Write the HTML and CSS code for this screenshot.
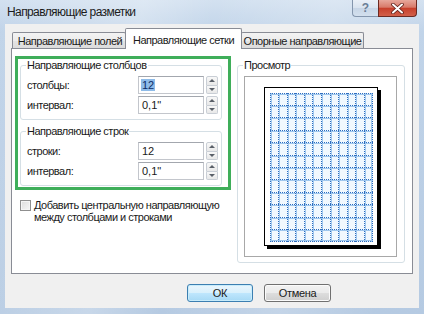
FILE: index.html
```html
<!DOCTYPE html>
<html lang="ru">
<head>
<meta charset="utf-8">
<title>Направляющие разметки</title>
<link rel="stylesheet" href="styles.css">
</head>
<body>
<div class="window">
  <div class="titlebar">
    <span class="title">Направляющие разметки</span>
    <div class="caption-btns">
      <div class="cap help">?</div>
      <div class="cap close">
        <svg width="13" height="11" viewBox="0 0 13 11"><path d="M2 1.5 L11 9.5 M11 1.5 L2 9.5" stroke="#5a1d16" stroke-width="3.6" stroke-linecap="round"/><path d="M2 1.5 L11 9.5 M11 1.5 L2 9.5" stroke="#fff" stroke-width="2" stroke-linecap="round"/></svg>
      </div>
    </div>
  </div>
  <div class="client">
    <div class="tabs">
      <div class="tab t1">Направляющие полей</div>
      <div class="tab active t2">Направляющие сетки</div>
      <div class="tab t3">Опорные направляющие</div>
    </div>
    <div class="panel">
      <div class="left">
        <div class="highlight">
          <fieldset class="group">
            <legend>Направляющие столбцов</legend>
            <div class="fields">
              <span class="label">столбцы:</span>
              <div class="spin-input"><div class="input"><span class="sel">12</span></div><div class="spinner"><span class="up"></span><span class="down"></span></div></div>
              <span class="label">интервал:</span>
              <div class="spin-input"><div class="input">0,1"</div><div class="spinner"><span class="up"></span><span class="down"></span></div></div>
            </div>
          </fieldset>
          <fieldset class="group g2">
            <legend>Направляющие строк</legend>
            <div class="fields">
              <span class="label">строки:</span>
              <div class="spin-input"><div class="input">12</div><div class="spinner"><span class="up"></span><span class="down"></span></div></div>
              <span class="label">интервал:</span>
              <div class="spin-input"><div class="input">0,1"</div><div class="spinner"><span class="up"></span><span class="down"></span></div></div>
            </div>
          </fieldset>
        </div>
        <label class="check"><span class="box"></span><span class="check-text">Добавить центральную направляющую<br>между столбцами и строками</span></label>
      </div>
      <fieldset class="group preview">
        <legend>Просмотр</legend>
        <div class="preview-box">
          <div class="page">
            <svg class="grid" width="103" height="149" viewBox="0 0 103 149">
              <rect x="0" y="0" width="103" height="149" fill="#f1f8fe"/>
              <path class="lt" d="M1.5 0V149M9.5 0V149M18.5 0V149M26.5 0V149M35.5 0V149M43.5 0V149M52.5 0V149M61.5 0V149M69.5 0V149M78.5 0V149M86.5 0V149M95.5 0V149M101.5 0V149M0 1.5H103M0 13.5H103M0 25.5H103M0 38.5H103M0 50.5H103M0 63.5H103M0 75.5H103M0 87.5H103M0 100.5H103M0 112.5H103M0 125.5H103M0 137.5H103M0 147.5H103"/>
              <path class="dk" d="M0.5 0V149M8.5 0V149M17.5 0V149M25.5 0V149M34.5 0V149M42.5 0V149M51.5 0V149M60.5 0V149M68.5 0V149M77.5 0V149M85.5 0V149M94.5 0V149M102.5 0V149M0 0.5H103M0 12.5H103M0 24.5H103M0 37.5H103M0 49.5H103M0 62.5H103M0 74.5H103M0 86.5H103M0 99.5H103M0 111.5H103M0 124.5H103M0 136.5H103M0 148.5H103"/>
            </svg>
          </div>
        </div>
      </fieldset>
    </div>
    <div class="actions">
      <button class="btn default">ОК</button>
      <button class="btn">Отмена</button>
    </div>
  </div>
</div>
</body>
</html>
```
FILE: styles.css
```css
html, body {
  margin: 0;
  padding: 0;
  background: #b9cde4;
}
.window {
  width: 424px;
  height: 314px;
  box-sizing: border-box;
  padding: 0 5px 6px 5px;
  display: flex;
  flex-direction: column;
  background:
    linear-gradient(100deg, rgba(255,255,255,0) 0%, rgba(255,255,255,0.25) 30%, rgba(255,255,255,0) 45%, rgba(255,255,255,0.2) 70%, rgba(255,255,255,0) 90%),
    linear-gradient(180deg, #d3e1f0 0%, #c1d4e9 10%, #b5cae2 100%);
  font-family: "Liberation Sans", Arial, sans-serif;
  font-size: 11px;
  letter-spacing: -0.5px;
  color: #1a1a1a;
}
.titlebar {
  height: 24px;
  flex: none;
  display: flex;
  align-items: flex-start;
}
.title {
  font-family: "Liberation Sans", Arial, sans-serif;
  font-size: 12px;
  letter-spacing: -0.6px;
  line-height: 25px;
  padding-left: 2px;
  color: #1b1b1b;
}
.caption-btns {
  margin-left: auto;
  margin-right: 2px;
  display: flex;
}
.cap {
  height: 17px;
  box-sizing: border-box;
  display: flex;
  align-items: center;
  justify-content: center;
}
.help {
  width: 26px;
  border: 1px solid #8496ad;
  border-top: 0;
  border-right: 0;
  border-radius: 0 0 0 4px;
  background: linear-gradient(180deg, #e9eff7 0%, #d9e3ef 50%, #c7d5e6 51%, #d3e0ee 100%);
  color: #6a7e96;
  font-weight: bold;
  font-size: 12px;
  letter-spacing: 0;
}
.close {
  width: 39px;
  border: 1px solid #6b2a22;
  border-top: 0;
  border-radius: 0 0 4px 0;
  background: linear-gradient(180deg, #e7a89c 0%, #d87a6a 45%, #c7402c 52%, #d2604a 100%);
}
.client {
  flex: 1;
  background: #f0f0f0;
  padding: 4px 6px 0 6px;
  display: flex;
  flex-direction: column;
}
.tabs {
  display: flex;
  align-items: flex-end;
  height: 21px;
  margin-bottom: -1px;
  padding-left: 1px;
  position: relative;
  z-index: 1;
}
.tab {
  box-sizing: border-box;
  height: 16px;
  margin-bottom: 1px;
  border: 1px solid #898c95;
  border-bottom: 0;
  border-radius: 2px 2px 0 0;
  line-height: 17px;
  text-align: center;
  white-space: nowrap;
  background: linear-gradient(180deg, #f3f3f3 0%, #ececec 50%, #e3e3e3 51%, #dcdcdc 100%);
}
.t1 { width: 114px; padding-left: 2px; }
.t2 { width: 117px; margin-left: -1px; }
.t3 { width: 123px; margin-left: -1px; }
.tab.active {
  height: 21px;
  margin-bottom: 0;
  background: #fff;
  line-height: 22px;
  position: relative;
  z-index: 2;
}
.panel {
  flex: none;
  box-sizing: border-box;
  height: 226px;
  border: 1px solid #898c95;
  background: #fff;
  display: flex;
  align-items: flex-start;
  padding: 7px 0 0 3px;
}
.left {
  width: 216px;
  display: flex;
  flex-direction: column;
}
.highlight {
  box-sizing: border-box;
  width: 216px;
  border: 3px solid #3fae5a;
  padding: 0 0 1px 2px;
}
.group {
  margin: 0;
  border: 1px solid #d5dfe5;
  border-radius: 3px;
  padding: 4px 0 5px 6px;
  width: 202px;
  box-sizing: border-box;
}
.group legend {
  padding: 0 1px;
  margin-left: -1px;
  line-height: 13px;
  font-size: 11px;
}
.g2 {
  margin-top: 5px;
}
.fields {
  display: grid;
  grid-template-columns: 111px auto;
  grid-auto-rows: 18px;
  row-gap: 2px;
  align-items: center;
}
.spin-input {
  display: flex;
  height: 18px;
}
.input {
  box-sizing: border-box;
  width: 66px;
  height: 18px;
  border: 1px solid #c3c6cc;
  border-top-color: #a3a7ae;
  background: #fff;
  padding-left: 3px;
  line-height: 16px;
  letter-spacing: 0;
}
.sel {
  background: #8ebbe8;
  color: #0d2c66;
  padding: 0 1px;
  margin-left: -1px;
}
.spinner {
  margin-left: 2px;
  width: 12px;
  display: flex;
  flex-direction: column;
}
.spinner span {
  flex: 1;
  box-sizing: border-box;
  border: 1px solid #c9ced5;
  background: linear-gradient(180deg, #f8f8f8, #e8e8e8);
  display: flex;
  align-items: center;
  justify-content: center;
}
.spinner .up { border-radius: 2px 2px 0 0; }
.spinner .down { border-top: 0; border-radius: 0 0 2px 2px; }
.spinner .up::after {
  content: "";
  border-left: 3px solid transparent;
  border-right: 3px solid transparent;
  border-bottom: 3px solid #5a6069;
}
.spinner .down::after {
  content: "";
  border-left: 3px solid transparent;
  border-right: 3px solid transparent;
  border-top: 3px solid #5a6069;
}
.check {
  display: flex;
  gap: 3px;
  margin: 9px 0 0 5px;
}
.box {
  flex: none;
  width: 11px;
  height: 11px;
  box-sizing: border-box;
  margin-top: 1px;
  border: 1px solid #8f8f8f;
  background: linear-gradient(135deg, #dcdcdc, #f6f6f6);
  box-shadow: inset 0 0 0 1px #f4f4f4;
}
.check-text {
  line-height: 12px;
  white-space: nowrap;
}
.preview {
  margin-left: 6px;
  margin-top: 3px;
  width: 168px;
  padding: 4px 7px 5px 6px;
}
.preview-box {
  box-sizing: border-box;
  height: 181px;
  border: 1px solid #a8a8a8;
  display: flex;
  justify-content: center;
  align-items: flex-start;
  padding-top: 10px;
  background: #fff;
}
.page {
  box-sizing: border-box;
  width: 114px;
  height: 159px;
  border: 1px solid #000;
  box-shadow: 3px 3px 0 #000;
  background: #fff;
  padding: 5px 4px 3px 5px;
  margin-left: 1px;
}
.grid {
  display: block;
}
.grid path {
  fill: none;
  stroke-width: 1;
}
.grid .lt {
  stroke: #9fc7ee;
}
.grid .dk {
  stroke: #2e6dbf;
  stroke-dasharray: 1 1;
}
.actions {
  display: flex;
  justify-content: flex-end;
  gap: 11px;
  padding: 10px 82px 0 0;
}
.btn {
  width: 67px;
  height: 18px;
  box-sizing: border-box;
  border: 1px solid #707070;
  border-radius: 3px;
  background: linear-gradient(180deg, #f2f2f2 0%, #ebebeb 48%, #dddddd 52%, #cfcfcf 100%);
  box-shadow: inset 0 0 0 1px #fbfbfb;
  font-family: "Liberation Sans", Arial, sans-serif;
  font-size: 11px;
  letter-spacing: -0.3px;
  color: #1a1a1a;
  padding: 0;
  line-height: 16px;
}
.btn.default {
  width: 66px;
  border-color: #3c7fb1;
  background: linear-gradient(180deg, #eaf6fd 0%, #d9f0fc 48%, #bee6fd 52%, #a7d9f5 100%);
  box-shadow: inset 0 0 0 1px #c8ecfb;
}
```
